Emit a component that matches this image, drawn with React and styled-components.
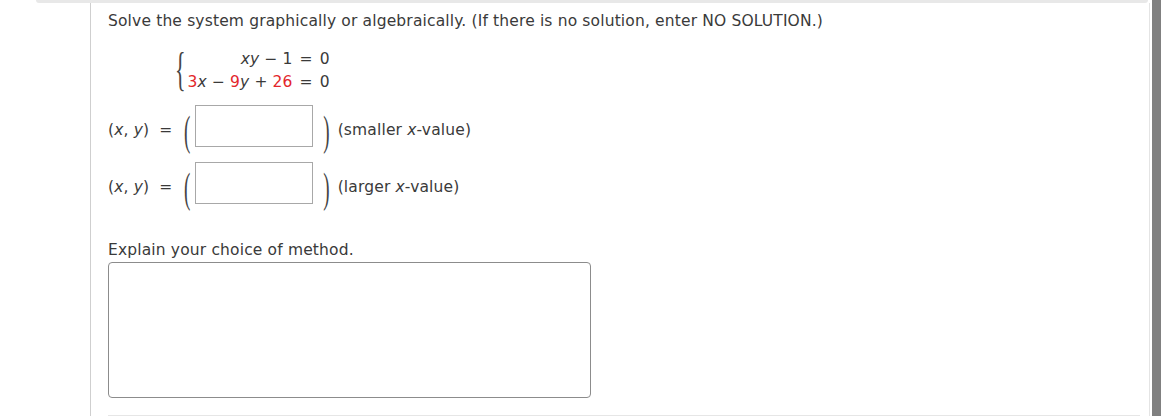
import React from 'react';
import styled, { createGlobalStyle } from 'styled-components';

const GlobalStyle = createGlobalStyle`
    html, body { margin: 0; padding: 0; background: #fff; }
    body { font-family: "DejaVu Sans", Verdana, sans-serif; color: #3a3a3a; }
`;

const Screen = styled.div`
    display: flex; flex-direction: row; height: 416px; overflow: hidden;
`;
const Frame = styled.div`
    width: 1150px; display: flex; flex-direction: column; flex-shrink: 0;
`;
const TopEdge = styled.div`
    margin-left: 36px; width: 1112px; height: 3px; background: #e8e8e8; border-radius: 0 0 3px 3px; flex-shrink: 0;
`;
const Sheet = styled.div`
    flex: 1; margin-left: 90px; border-left: 1px solid #cfcfcf; border-right: 1px solid #e4e4e4;
    padding: 9px 0 0 17px; display: flex; flex-direction: column;
`;
const ScrollTrack = styled.div`
    margin-left: 2px; width: 9px; background: #808080; flex-shrink: 0;
`;
const Text = styled.div`
    font-size: 15.5px; line-height: 18px; letter-spacing: 0.15px; white-space: nowrap;
`;
const System = styled.div`
    display: flex; flex-direction: row; align-items: center; margin: 17px 0 0 67px; height: 46px;
`;
const Stretch = styled.span`
    display: inline-block; font-family: "Liberation Serif", serif; font-size: ${p => p.size}px; line-height: 1;
    color: #444; transform: scale(1, ${p => p.sy}); transform-origin: center;
`;
const Lines = styled.div`
    display: grid; grid-template-columns: auto auto; row-gap: 5px; margin-left: 2px;
    font-size: 15.5px; line-height: 18px; letter-spacing: 0.15px;
`;
const Lhs = styled.div` text-align: right; white-space: nowrap; `;
const Rhs = styled.div` white-space: nowrap; `;
const Var = styled.i` font-style: italic; `;
const Red = styled.span` color: #e3262b; `;
const Op = styled.span` margin: 0 ${p => p.sp || 5}px; `;
const AnswerRow = styled.div`
    display: flex; flex-direction: row; align-items: center; margin-top: ${p => p.top}px; height: 42px;
`;
const Label = styled(Text)` width: 74px; margin-top: 8px; `;
const Paren = styled(Stretch)` margin: 9px 2px 0; `;
const Field = styled.div`
    width: 116px; height: 40px; border: 1px solid #a8a8a8; margin-left: 3px; box-sizing: content-box;
`;
const Note = styled(Text)` margin-left: 6px; margin-top: 8px; `;
const Explain = styled(Text)` margin-top: 37px; `;
const TextBox = styled.div`
    margin-top: 3px; width: 481px; height: 134px; border: 1px solid #8c8c8c; border-radius: 4px; flex-shrink: 0;
`;
const NextEdge = styled.div`
    margin-top: 17px; margin-right: 9px; height: 2px; background: #e6e6e6; flex-shrink: 0;
`;

const Answer = ({ top, note }) => (
    <AnswerRow top={top}>
        <Label>(<Var>x</Var>, <Var>y</Var>) &nbsp;=</Label>
        <Paren size={19} sy={2.2}>(</Paren>
        <Field />
        <Paren size={19} sy={2.2} style={{ marginLeft: 10 }}>)</Paren>
        <Note>{note}</Note>
    </AnswerRow>
);

export default function App() {
    return (
        <Screen>
            <GlobalStyle />
            <Frame>
                <TopEdge />
                <Sheet>
                    <Text>Solve the system graphically or algebraically. (If there is no solution, enter NO SOLUTION.)</Text>
                    <System>
                        <Stretch size={22} sy={2.1}>{'{'}</Stretch>
                        <Lines>
                            <Lhs><Var>xy</Var><Op>−</Op>1</Lhs>
                            <Rhs><Op sp={7}>=</Op>0</Rhs>
                            <Lhs><Red>3</Red><Var>x</Var><Op>−</Op><Red>9</Red><Var>y</Var><Op>+</Op><Red>26</Red></Lhs>
                            <Rhs><Op sp={7}>=</Op>0</Rhs>
                        </Lines>
                    </System>
                    <Answer top={12} note={<>(smaller <Var>x</Var>-value)</>} />
                    <Answer top={15} note={<>(larger <Var>x</Var>-value)</>} />
                    <Explain>Explain your choice of method.</Explain>
                    <TextBox />
                    <NextEdge />
                </Sheet>
            </Frame>
            <ScrollTrack />
        </Screen>
    );
}
